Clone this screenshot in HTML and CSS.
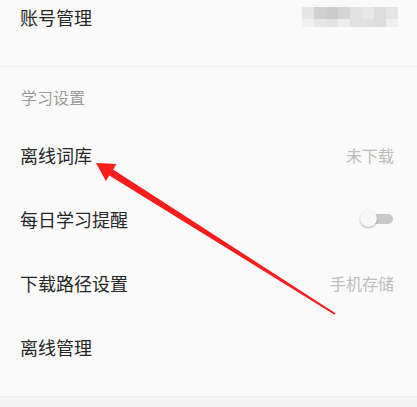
FILE: index.html
```html
<!DOCTYPE html>
<html lang="zh-CN">
<head>
<meta charset="utf-8">
<title>设置</title>
<link rel="stylesheet" href="styles.css">
</head>
<body>
<div class="page">
  <div class="account">
    <span class="label">账号管理</span>
    <div class="mosaic">
      <i></i><i></i><i></i><i></i><i></i><i></i><i></i><i></i>
      <i></i><i></i><i></i><i></i><i></i><i></i><i></i><i></i>
    </div>
  </div>
  <div class="list">
    <div class="section-title">学习设置</div>
    <div class="item"><span class="label">离线词库</span><span class="value">未下载</span></div>
    <div class="item"><span class="label">每日学习提醒</span><span class="switch"><span class="knob"></span></span></div>
    <div class="item"><span class="label">下载路径设置</span><span class="value">手机存储</span></div>
    <div class="item"><span class="label">离线管理</span></div>
  </div>
  <div class="footer"></div>
  <svg class="arrow" width="417" height="407" viewBox="0 0 417 407" xmlns="http://www.w3.org/2000/svg">
    <polygon points="96,163 105.9,181.1 109.3,175.6 334.5,314.8 335.5,313.2 113.1,169.6 116.5,164.1" fill="#fb1c1c"/>
  </svg>
</div>
</body>
</html>
```
FILE: styles.css
```css
html, body {
  margin: 0;
  padding: 0;
}
body {
  background: #fafafa;
  font-family: "Noto Sans CJK SC", "Noto Sans", sans-serif;
  width: 417px;
  height: 407px;
  overflow: hidden;
}
.page {
  position: relative;
  height: 407px;
  display: flex;
  flex-direction: column;
}
.account {
  box-sizing: border-box;
  height: 67px;
  flex: none;
  display: flex;
  justify-content: space-between;
  align-items: flex-start;
  padding: 0 19px 0 20px;
  border-bottom: 1px solid #efefef;
}
.account .label {
  line-height: 34px;
}
.label {
  font-size: 18px;
  color: #262626;
}
.mosaic {
  margin-top: 7px;
  display: grid;
  grid-template-columns: repeat(8, 12px);
  grid-template-rows: 12px 8px;
}
.mosaic i:nth-child(1) { background: #e6e6e6; }
.mosaic i:nth-child(2) { background: #d0d0d0; }
.mosaic i:nth-child(3) { background: #cbcbcb; }
.mosaic i:nth-child(4) { background: #d4d4d4; }
.mosaic i:nth-child(5) { background: #e2e2e2; }
.mosaic i:nth-child(6) { background: #e8e8e8; }
.mosaic i:nth-child(7) { background: #dcdcdc; }
.mosaic i:nth-child(8) { background: #e6e6e6; }
.mosaic i:nth-child(9) { background: #f0f0f0; }
.mosaic i:nth-child(10) { background: #e6e6e6; }
.mosaic i:nth-child(11) { background: #e3e3e3; }
.mosaic i:nth-child(12) { background: #eeeeee; }
.mosaic i:nth-child(13) { background: #e1e1e1; }
.mosaic i:nth-child(14) { background: #e1e1e1; }
.mosaic i:nth-child(15) { background: #dddddd; }
.mosaic i:nth-child(16) { background: #f0f0f0; }
.list {
  flex: none;
  padding-bottom: 17px;
  border-bottom: 1px solid #efefef;
}
.section-title {
  box-sizing: border-box;
  height: 56px;
  padding: 3px 0 0 21px;
  display: flex;
  align-items: center;
  font-size: 16px;
  color: #9a9a9a;
}
.item {
  height: 64px;
  display: flex;
  align-items: center;
  justify-content: space-between;
  padding: 0 23px 0 20px;
}
.value {
  font-size: 16px;
  color: #bdbdbd;
}
.switch {
  position: relative;
  width: 32px;
  height: 10px;
  border-radius: 5px;
  background: #c9c9c9;
  margin-right: 1px;
}
.knob {
  position: absolute;
  left: -1px;
  top: -4px;
  width: 17px;
  height: 17px;
  border-radius: 50%;
  background: #f7f7f7;
  box-shadow: 0 1px 2px rgba(0, 0, 0, 0.3);
}
.footer {
  flex: 1;
  background: #f5f5f5;
}
.arrow {
  position: absolute;
  left: 0;
  top: 0;
  pointer-events: none;
}
```
